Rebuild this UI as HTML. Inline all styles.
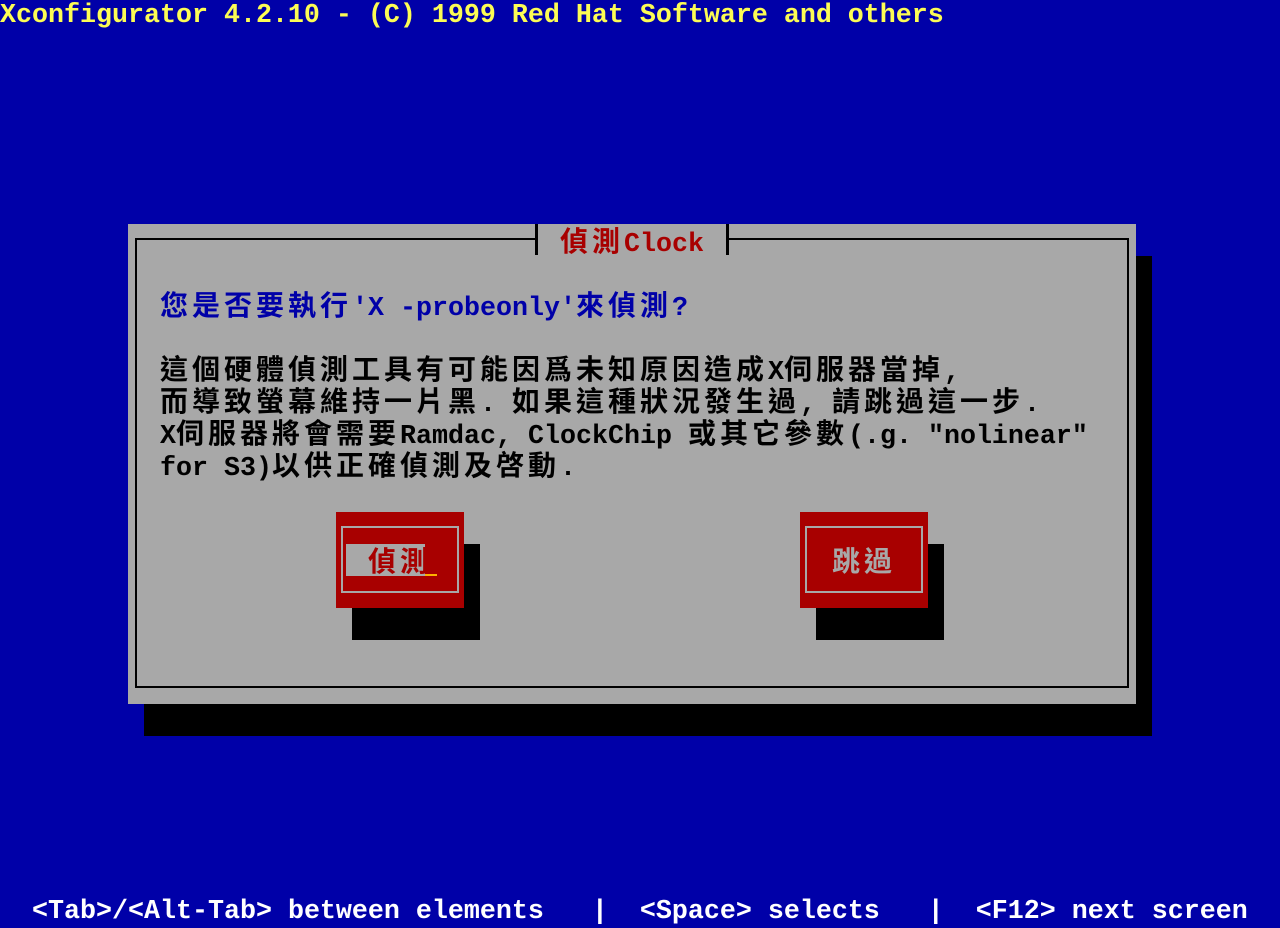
<!DOCTYPE html>
<html><head><meta charset="utf-8"><style>
body{margin:0;width:1280px;height:928px;background:#0000a8;position:relative;overflow:hidden;font-family:"Liberation Mono","Noto Sans CJK TC",monospace;}
.t{position:absolute;white-space:pre;font-size:26.67px;line-height:32px;height:32px;font-weight:bold;}
.k{font-family:"Noto Sans CJK TC","WenQuanYi Zen Hei",sans-serif;font-size:28px;letter-spacing:4px;font-weight:bold;}
.b{position:absolute;}
</style></head><body>
<div class="t" style="left:0;top:0;color:#fcfc54">Xconfigurator 4.2.10 - (C) 1999 Red Hat Software and others</div>

<div class="b" style="left:144px;top:256px;width:1008px;height:480px;background:#000"></div>
<div class="b" style="left:128px;top:224px;width:1008px;height:480px;background:#a8a8a8"></div>
<div class="b" style="left:135px;top:238px;width:990px;height:446px;border:2px solid #000"></div>
<div class="b" style="left:538px;top:224px;width:188px;height:32px;background:#a8a8a8"></div>
<div class="b" style="left:535px;top:224px;width:3px;height:31px;background:#000"></div>
<div class="b" style="left:726px;top:224px;width:3px;height:31px;background:#000"></div>
<div class="t" style="left:560px;top:224px;color:#a80000"><span class="k">偵測</span>Clock</div>

<div class="t" style="left:160px;top:288px;color:#0000a8"><span class="k">您是否要執行</span>'X -probeonly'<span class="k">來偵測</span>?</div>
<div class="t" style="left:160px;top:352px;color:#000"><span class="k">這個硬體偵測工具有可能因爲未知原因造成</span>X<span class="k">伺服器當掉</span>,</div>
<div class="t" style="left:160px;top:384px;color:#000"><span class="k">而導致螢幕維持一片黑</span>. <span class="k">如果這種狀況發生過</span>, <span class="k">請跳過這一步</span>.</div>
<div class="t" style="left:160px;top:416px;color:#000">X<span class="k">伺服器將會需要</span>Ramdac, ClockChip <span class="k">或其它參數</span>(.g. "nolinear"</div>
<div class="t" style="left:160px;top:448px;color:#000">for S3)<span class="k">以供正確偵測及啓動</span>.</div>

<div class="b" style="left:352px;top:544px;width:128px;height:96px;background:#000"></div>
<div class="b" style="left:336px;top:512px;width:128px;height:96px;background:#a80000"></div>
<div class="b" style="left:341px;top:526px;width:114px;height:63px;border:2px solid #a8a8a8"></div>
<div class="b" style="left:346px;top:544px;width:79px;height:32px;background:#a8a8a8"></div>
<div class="b" style="left:425px;top:574px;width:12px;height:2px;background:#fcb000"></div>
<div class="t" style="left:368px;top:544px;color:#a80000"><span class="k">偵測</span></div>

<div class="b" style="left:816px;top:544px;width:128px;height:96px;background:#000"></div>
<div class="b" style="left:800px;top:512px;width:128px;height:96px;background:#a80000"></div>
<div class="b" style="left:805px;top:526px;width:114px;height:63px;border:2px solid #a8a8a8"></div>
<div class="t" style="left:832px;top:544px;color:#a8a8a8"><span class="k">跳過</span></div>

<div class="t" style="left:32px;top:896px;color:#fff">&lt;Tab&gt;/&lt;Alt-Tab&gt; between elements   |  &lt;Space&gt; selects   |  &lt;F12&gt; next screen</div>
</body></html>
